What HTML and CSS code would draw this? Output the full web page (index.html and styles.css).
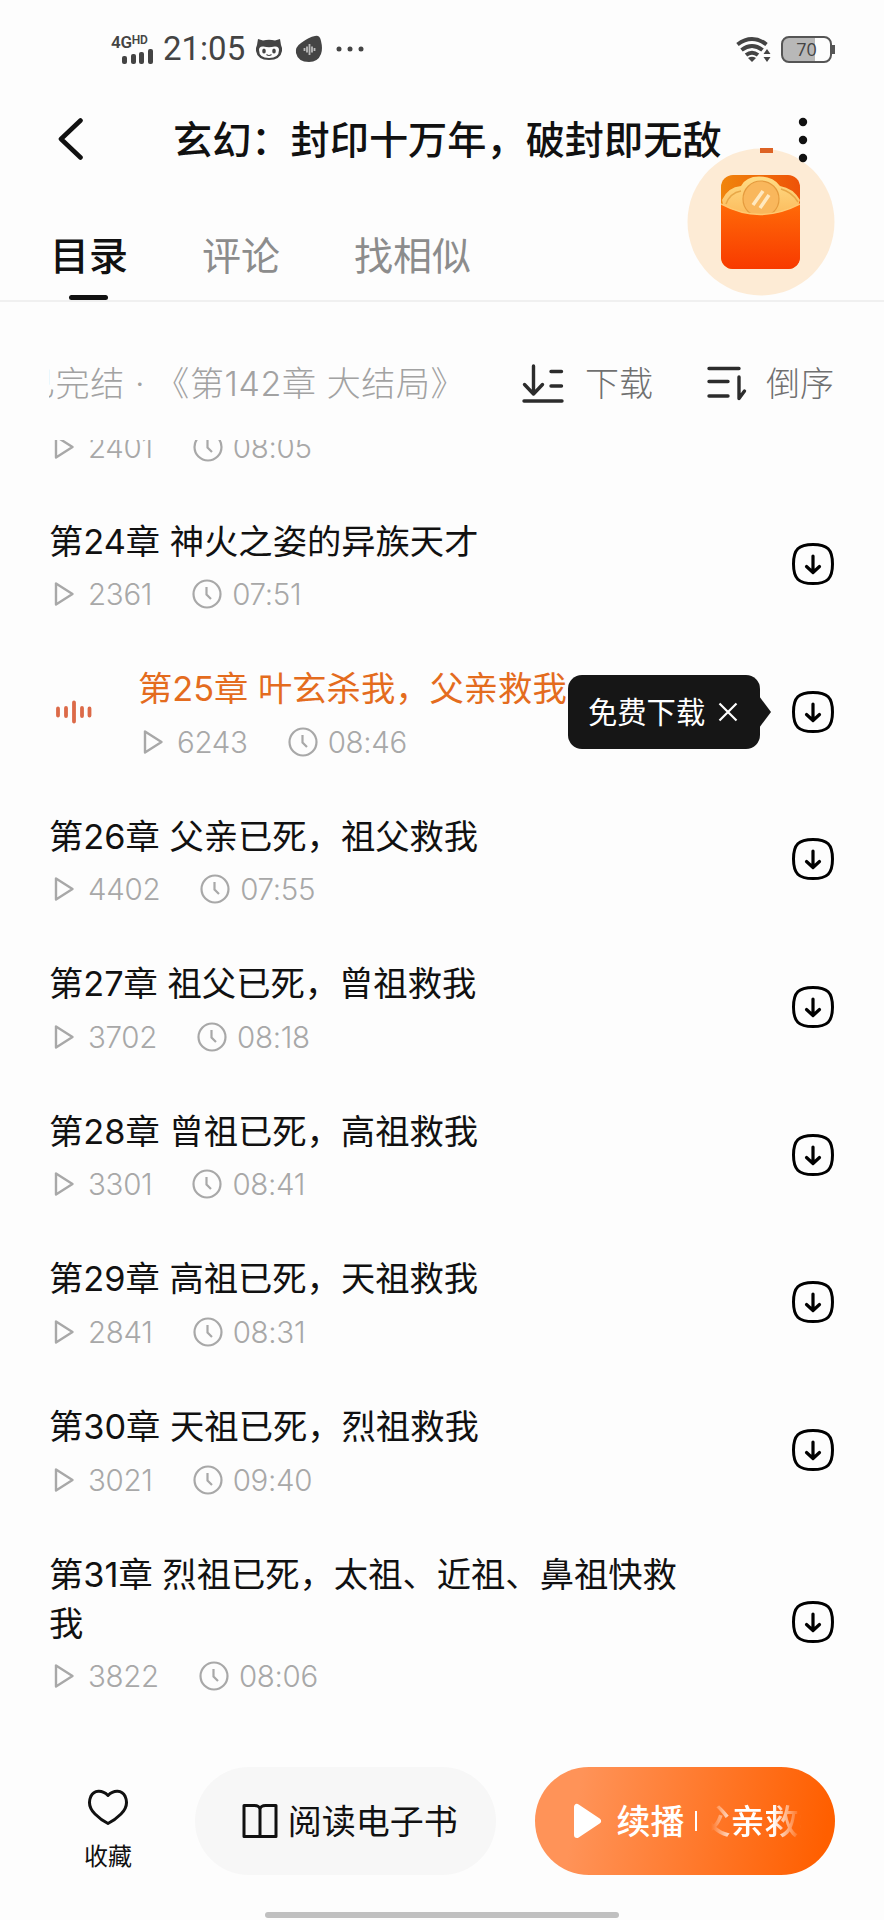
FILE: index.html
```html
<!DOCTYPE html>
<html lang="zh-CN">
<head>
    <meta charset="UTF-8">
    <meta name="viewport" content="width=device-width, initial-scale=1.0">
    <title>玄幻：封印十万年，破封即无敌</title>
    <link rel="stylesheet" href="styles.css">
</head>
<body>
    <!-- shared icons -->
    <svg class="sprite">
        <symbol id="play" viewBox="0 0 22 28">
            <path d="M3 3.500v21L19.500 14z" fill="none" stroke="currentColor" stroke-width="2.400" stroke-linejoin="round"/>
        </symbol>
        <symbol id="clock" viewBox="0 0 30 30">
            <circle cx="15" cy="15" r="13.500" fill="none" stroke="currentColor" stroke-width="2.200"/>
            <path d="M14.500 8v7.500l4.500 4.500" fill="none" stroke="currentColor" stroke-width="2.200"/>
        </symbol>
        <symbol id="down" viewBox="0 0 42 42">
            <path d="M21 1.500C35.500 1.500 40.500 6.500 40.500 21S35.500 40.500 21 40.500 1.500 35.500 1.500 21 6.500 1.500 21 1.500z" fill="none" stroke="currentColor" stroke-width="3"/>
            <path d="M21 13v16M14.500 23.500l6.500 6 6.500-6" fill="none" stroke="currentColor" stroke-width="3.200" stroke-linecap="round" stroke-linejoin="round"/>
        </symbol>
    </svg>

    <div class="status">
        <div class="signal">
            <div class="net">4G<sup>HD</sup></div>
            <svg width="32" height="15" viewBox="0 0 32 15" fill="#444">
                <rect x="0" y="7" width="5" height="8" rx="2"/>
                <rect x="9" y="5" width="5" height="10" rx="2"/>
                <rect x="17" y="3" width="5" height="12" rx="2"/>
                <rect x="26" y="0" width="5" height="15" rx="2"/>
            </svg>
        </div>
        <div class="time">21:05</div>
        <svg class="cat" width="28" height="23" viewBox="0 0 28 23">
            <path d="M3 1l5 1.500q6-1.500 12 0L25 1l1 6q1.500 3 1 6-1.500 9-13 9T1 13q-.5-3 1-6z" fill="#444"/>
            <path d="M4 12q0-4 4.500-3.500 5.500 1.500 11 0Q24 8 24 12q0 8-10 8T4 12z" fill="#fdfdfd"/>
            <ellipse cx="9" cy="13" rx="1.800" ry="2.500" fill="#444"/>
            <ellipse cx="19" cy="13" rx="1.800" ry="2.500" fill="#444"/>
            <path d="M11.500 16.500q2.500 2 5 0" stroke="#444" stroke-width="1.200" fill="none"/>
        </svg>
        <svg class="drop" width="28" height="28" viewBox="0 0 28 28">
            <path d="M20 1q5-1 6 5 2 8 0 13-3 8-12 8Q3 27 1 18q-1-6 5-10Q14 2 20 1z" fill="#444"/>
            <path d="M9.500 13v3M12 11.500v6M14.500 9v11M17 11.500v6M19.500 13v3" stroke="#bbb" stroke-width="1.800"/>
        </svg>
        <svg class="more" width="28" height="6" viewBox="0 0 28 6" fill="#444">
            <circle cx="3" cy="3" r="2.500"/>
            <circle cx="14" cy="3" r="2.500"/>
            <circle cx="25" cy="3" r="2.500"/>
        </svg>
        <svg class="wifi" width="36" height="26" viewBox="0 0 36 26">
            <g fill="none" stroke="#444" stroke-width="4">
                <path d="M1.500 8.500Q16 -2.500 30.500 8.500"/>
                <path d="M5.500 14Q16 6 26.500 14"/>
                <path d="M10 19Q16 14.500 22 19"/>
            </g>
            <path d="M12 22q4-2.500 8 0l-4 4z" fill="#444"/>
            <path d="M31 13l3.500 5h-7zM31 26l3.500-5h-7z" fill="#444"/>
        </svg>
        <div class="battery"><span>70</span></div>
    </div>

    <div class="nav">
        <svg class="back" width="26" height="44" viewBox="0 0 26 44">
            <path d="M22.500 2.500L3 21 22.500 39.500" fill="none" stroke="#111" stroke-width="4.600" stroke-linecap="round" stroke-linejoin="round"/>
        </svg>
        <h1>玄幻：封印十万年，破封即无敌</h1>
        <svg class="dots" width="10" height="46" viewBox="0 0 10 46" fill="#111">
            <circle cx="5" cy="5" r="4.200"/>
            <circle cx="5" cy="23" r="4.200"/>
            <circle cx="5" cy="41" r="4.200"/>
        </svg>
        <!-- floating red packet -->
        <svg class="packet" width="150" height="152" viewBox="0 0 150 152">
            <defs>
                <linearGradient id="red" x1="0" y1="0" x2="0" y2="1">
                    <stop offset="0" stop-color="#ff6a08"/>
                    <stop offset="1" stop-color="#f83a00"/>
                </linearGradient>
                <linearGradient id="back" x1="0" y1="0" x2="1" y2="0">
                    <stop offset="0" stop-color="#f0850c"/>
                    <stop offset="1" stop-color="#ee5208"/>
                </linearGradient>
                <linearGradient id="gold" x1="0" y1="0" x2="0" y2="1">
                    <stop offset="0" stop-color="#ffdc85"/>
                    <stop offset="1" stop-color="#fbb95a"/>
                </linearGradient>
                <clipPath id="box"><rect x="35" y="29" width="79" height="94" rx="12"/></clipPath>
            </defs>
            <circle cx="75" cy="76" r="73.500" fill="#fdebd5"/>
            <path d="M74 4.500h13" stroke="#dd6325" stroke-width="5"/>
            <g clip-path="url(#box)">
                <rect x="35" y="29" width="79" height="94" fill="url(#back)"/>
                <path d="M36 54Q42 41 55 40 60 30.500 73 30.500 87 30.500 94 40 107 42 114 54L108 72H40z" fill="url(#gold)"/>
                <path d="M40 58Q44 47 55 45M95 43Q106 46 112 56" fill="none" stroke="#e8a848" stroke-width="1.500"/>
                <circle cx="75" cy="53" r="18" fill="#f9b75c" stroke="#e59b3e" stroke-width="1.200"/>
                <path d="M67 59l10-14M74 62l9-13" stroke="#ffe9c0" stroke-width="3.500"/>
                <path d="M35 58Q74 79 114 58V123H35z" fill="url(#red)"/>
                <path d="M35 58Q74 79 114 58" fill="none" stroke="#ffc870" stroke-width="1.500"/>
            </g>
        </svg>
    </div>

    <div class="tabs">
        <div class="tab active">目录</div>
        <div class="tab">评论</div>
        <div class="tab">找相似</div>
    </div>

    <div class="toolbar">
        <div class="state"><span>已完结 · 《第142章 大结局》</span></div>
        <svg class="tool-dl" width="42" height="40" viewBox="0 0 42 40">
            <path d="M11.500 2v28M2.500 20.500l9 9.500 9-9.500M29 7.500h10.500M29 22h10.500M2 37h38" fill="none" stroke="#2c2c2c" stroke-width="3.400" stroke-linecap="round" stroke-linejoin="round"/>
        </svg>
        <div class="tool">下载</div>
        <svg class="tool-sort" width="42" height="36" viewBox="0 0 42 36">
            <path d="M3 2.500h30M3 15.500h19M3 30h19M33 11v21.500l5.500-7.500" fill="none" stroke="#2c2c2c" stroke-width="3.400" stroke-linecap="round" stroke-linejoin="round"/>
        </svg>
        <div class="tool">倒序</div>
    </div>

    <div class="list">
        <div class="row first">
            <div class="info">
                <div class="meta"><svg class="play"><use href="#play"/></svg><span>2401</span><svg class="clock"><use href="#clock"/></svg><span>08:05</span></div>
            </div>
        </div>
        <div class="row">
            <div class="info">
                <div class="name">第24章 神火之姿的异族天才</div>
                <div class="meta"><svg class="play"><use href="#play"/></svg><span>2361</span><svg class="clock"><use href="#clock"/></svg><span>07:51</span></div>
            </div>
            <svg class="down"><use href="#down"/></svg>
        </div>
        <div class="row current">
            <svg class="wave" width="36" height="24" viewBox="0 0 36 24">
                <path d="M2 8.500v7M10 8v8M18 2.500v19M26 8v8M33.500 8.500v7" stroke="#dc6a48" stroke-width="3.800" stroke-linecap="round"/>
            </svg>
            <div class="info">
                <div class="name">第25章 叶玄杀我，父亲救我</div>
                <div class="meta"><svg class="play"><use href="#play"/></svg><span>6243</span><svg class="clock"><use href="#clock"/></svg><span>08:46</span></div>
            </div>
            <svg class="down"><use href="#down"/></svg>
            <div class="tip">
                <span>免费下载</span>
                <svg width="20" height="20" viewBox="0 0 20 20">
                    <path d="M1.500 1.500l17 17M18.500 1.500l-17 17" stroke="#fff" stroke-width="2.200"/>
                </svg>
            </div>
        </div>
        <div class="row">
            <div class="info">
                <div class="name">第26章 父亲已死，祖父救我</div>
                <div class="meta"><svg class="play"><use href="#play"/></svg><span>4402</span><svg class="clock"><use href="#clock"/></svg><span>07:55</span></div>
            </div>
            <svg class="down"><use href="#down"/></svg>
        </div>
        <div class="row">
            <div class="info">
                <div class="name">第27章 祖父已死，曾祖救我</div>
                <div class="meta"><svg class="play"><use href="#play"/></svg><span>3702</span><svg class="clock"><use href="#clock"/></svg><span>08:18</span></div>
            </div>
            <svg class="down"><use href="#down"/></svg>
        </div>
        <div class="row">
            <div class="info">
                <div class="name">第28章 曾祖已死，高祖救我</div>
                <div class="meta"><svg class="play"><use href="#play"/></svg><span>3301</span><svg class="clock"><use href="#clock"/></svg><span>08:41</span></div>
            </div>
            <svg class="down"><use href="#down"/></svg>
        </div>
        <div class="row">
            <div class="info">
                <div class="name">第29章 高祖已死，天祖救我</div>
                <div class="meta"><svg class="play"><use href="#play"/></svg><span>2841</span><svg class="clock"><use href="#clock"/></svg><span>08:31</span></div>
            </div>
            <svg class="down"><use href="#down"/></svg>
        </div>
        <div class="row">
            <div class="info">
                <div class="name">第30章 天祖已死，烈祖救我</div>
                <div class="meta"><svg class="play"><use href="#play"/></svg><span>3021</span><svg class="clock"><use href="#clock"/></svg><span>09:40</span></div>
            </div>
            <svg class="down"><use href="#down"/></svg>
        </div>
        <div class="row">
            <div class="info">
                <div class="name">第31章 烈祖已死，太祖、近祖、鼻祖快救我</div>
                <div class="meta"><svg class="play"><use href="#play"/></svg><span>3822</span><svg class="clock"><use href="#clock"/></svg><span>08:06</span></div>
            </div>
            <svg class="down"><use href="#down"/></svg>
        </div>
    </div>

    <div class="bottom">
        <div class="fav">
            <svg width="42" height="37" viewBox="0 0 42 37">
                <path d="M21 6.500C15 .5 7 1 3.800 7.500 1 14 3 20 8 25q6 6 13 9.500Q28 31 34 25c5-5 7-11 4.200-17.500C35 1 27 .5 21 6.500z" fill="none" stroke="#111" stroke-width="3" stroke-linejoin="round"/>
            </svg>
            <span>收藏</span>
        </div>
        <div class="read">
            <svg width="36" height="36" viewBox="0 0 36 36">
                <path d="M18 5v28M2 2.500h10.500Q17 2.500 18 6q1-3.500 5.500-3.500H34V33.500H2z" fill="none" stroke="#111" stroke-width="3" stroke-linejoin="round"/>
            </svg>
            <span>阅读电子书</span>
        </div>
        <div class="resume">
            <svg width="28" height="36" viewBox="0 0 28 36">
                <path d="M3 4v28L24 18z" fill="#fff" stroke="#fff" stroke-width="6" stroke-linejoin="round"/>
            </svg>
            <span class="go">续播</span>
            <i class="bar"></i>
            <div class="marquee"><span>父亲救我</span></div>
        </div>
    </div>
    <div class="home"></div>
</body>
</html>
```
FILE: styles.css
```css
* {
    box-sizing: border-box;
}
body {
    margin: 0;
    width: 884px;
    height: 1920px;
    overflow: hidden;
    display: flex;
    flex-direction: column;
    background-color: #fdfdfd;
    color: #111;
    font-family: Inter, "Noto Sans CJK SC", sans-serif;
}
svg {
    flex: none;
    display: block;
}
.sprite {
    position: absolute;
    width: 0;
    height: 0;
}

/* status bar */
.status {
    height: 98px;
    flex: none;
    display: flex;
    align-items: center;
    padding: 0 49px 0 111px;
    color: #444;
}
.signal {
    width: 44px;
    display: flex;
    flex-direction: column;
    align-items: flex-end;
    padding-right: 1px;
}
.net {
    width: 43px;
    height: 15px;
    font: 600 17px/15px Roboto, sans-serif;
    letter-spacing: -0.3px;
    white-space: nowrap;
}
.net sup {
    font-size: 12px;
    line-height: 1;
    vertical-align: 4px;
}
.time {
    width: 91px;
    margin-left: 8px;
    font: 400 33px/40px Roboto, sans-serif;
    white-space: nowrap;
}
.cat {
    margin-left: 1px;
}
.drop {
    margin-left: 12px;
}
.more {
    margin-left: 13px;
}
.wifi {
    margin-left: auto;
}
.battery {
    position: relative;
    width: 51px;
    height: 27px;
    margin: 0 3px 0 9px;
    border: 2.5px solid #555;
    border-radius: 8px;
    background: linear-gradient(to right, #b8b8b8 68%, #fdfdfd 68%);
    font: 500 18px/23px "Open Sans", sans-serif;
    text-align: center;
}
.battery::after {
    content: "";
    position: absolute;
    right: -5px;
    top: 7px;
    width: 3px;
    height: 9px;
    background-color: #555;
}

/* title and tabs */
.nav {
    position: relative;
    height: 84px;
    flex: none;
    display: flex;
    align-items: center;
    padding: 0 76px 0 58px;
}
h1 {
    margin: 0 0 0 89px;
    font-size: 39.2px;
    font-weight: 500;
    line-height: 50px;
    white-space: nowrap;
}
.dots {
    position: relative;
    z-index: 2;
    margin-left: auto;
}
.packet {
    position: absolute;
    z-index: 1;
    left: 686px;
    top: 48px;
}
.tabs {
    height: 120px;
    flex: none;
    display: flex;
    gap: 74px;
    padding: 49px 0 0 50px;
    border-bottom: 2px solid #f0f0f0;
    font-size: 39px;
    line-height: 50px;
    color: #8c8c8c;
}
.tab {
    position: relative;
}
.active {
    color: #111;
    font-weight: 500;
}
.active::after {
    content: "";
    position: absolute;
    left: 19px;
    bottom: 0;
    width: 39px;
    height: 5px;
    border-radius: 3px;
    background-color: #111;
}

/* toolbar */
.toolbar {
    height: 138px;
    flex: none;
    display: flex;
    align-items: center;
    padding: 26px 50px 0 49px;
    font-size: 34px;
    font-weight: 300;
    line-height: 50px;
}
.state {
    width: 410px;
    margin-right: 63px;
    overflow: hidden;
    white-space: nowrap;
    color: #a2a2a2;
    letter-spacing: 0.6px;
}
.state span {
    margin-left: -28px;
}
.tool {
    color: #707070;
}
.tool-dl {
    margin: 0 21px 0 0;
}
.tool-sort {
    margin: 0 18px 0 auto;
}

/* chapter list */
.list {
    flex: 1;
    overflow: hidden;
}
.row {
    position: relative;
    display: flex;
    align-items: center;
    padding: 25px 50px 25px 49px;
}
.first {
    margin-top: -38.5px;
}
.info {
    width: 650px;
}
.name {
    font-size: 34.3px;
    line-height: 49px;
}
.meta {
    display: flex;
    align-items: center;
    height: 40px;
    margin-top: 8.6px;
    color: #a8a8a8;
    font-size: 29.5px;
    font-weight: 350;
    letter-spacing: -0.3px;
}
.first .meta {
    margin-top: 0;
}
.play {
    width: 22px;
    height: 28px;
    margin: 0 13px 0 4px;
}
.clock {
    width: 30px;
    height: 30px;
    margin: 0 10px 0 40px;
}
.down {
    width: 42px;
    height: 42px;
    margin: -2px 0 0 auto;
    color: #000;
}
.current .name {
    color: #e46c1e;
}
.wave {
    margin: -2px 46px 0 7px;
}
.current .info {
    width: 560px;
}
.tip {
    position: absolute;
    left: 568px;
    top: 36px;
    width: 192px;
    height: 74px;
    display: flex;
    align-items: center;
    gap: 13px;
    padding-left: 20px;
    border-radius: 14px;
    background-color: #161616;
    color: #fff;
    font-size: 29.3px;
    white-space: nowrap;
}
.tip span {
    padding-bottom: 4px;
}
.tip::after {
    content: "";
    position: absolute;
    left: 191px;
    top: 21px;
    border: 16px solid transparent;
    border-left: 12px solid #161616;
    border-right: 0;
}

/* bottom bar */
.bottom {
    height: 145px;
    flex: none;
    display: flex;
    align-items: flex-start;
    padding: 0 49px;
}
.fav {
    width: 118px;
    display: flex;
    flex-direction: column;
    align-items: center;
    padding: 22px 0 0;
    margin-right: 28px;
    font-size: 24px;
    line-height: 36px;
}
.fav span {
    margin-top: 13px;
}
.read, .resume {
    height: 108px;
    display: flex;
    align-items: center;
    border-radius: 54px;
    font-size: 34px;
}
.read {
    width: 302px;
    padding-left: 47px;
    gap: 10px;
    background-color: #f7f7f7;
}
.read span, .go, .marquee {
    padding-bottom: 3px;
}
.resume {
    width: 300px;
    margin-left: 39px;
    padding-left: 39px;
    background: linear-gradient(100deg, #ff9358 15%, #ff5f00 95%);
    color: #fff;
    font-weight: 500;
}
.go {
    margin-left: 14px;
}
.bar {
    width: 2px;
    height: 20px;
    margin: 0 14px 0 11px;
    background-color: #fff;
}
.marquee {
    width: 90px;
    overflow: hidden;
    white-space: nowrap;
    -webkit-mask-image: linear-gradient(to right, transparent, #000 24px, #000 62px, transparent);
    mask-image: linear-gradient(to right, transparent, #000 24px, #000 62px, transparent);
}
.marquee span {
    margin-left: -15px;
}
.home {
    width: 354px;
    height: 6px;
    flex: none;
    margin: 0 auto 2px;
    border-radius: 3px;
    background-color: #c0c0c0;
}
```
